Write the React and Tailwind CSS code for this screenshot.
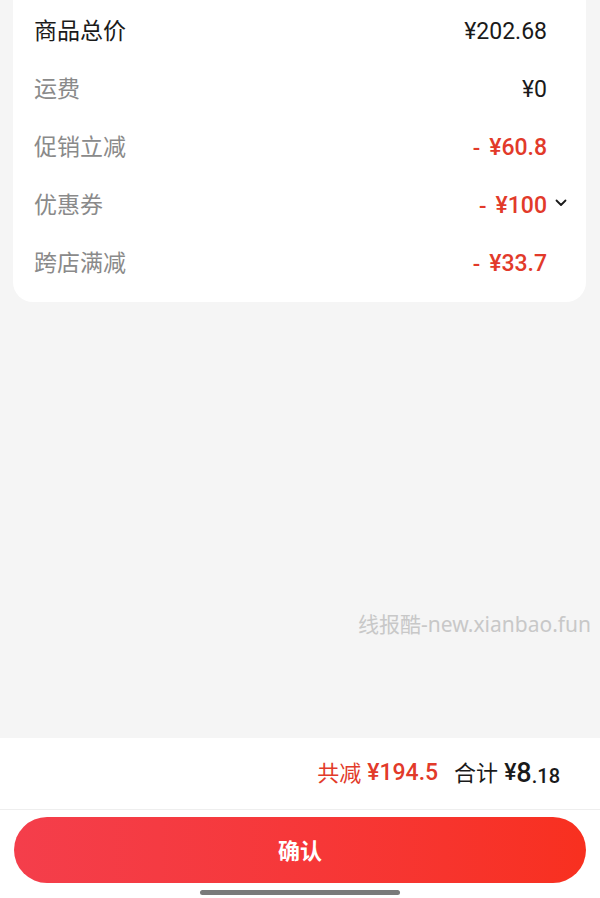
export default function App() {
  const cjk = { fontFamily: 'Roboto, "Noto Sans CJK SC", sans-serif' };
  const rows = [
    { label: "商品总价", value: "¥202.68", dark: true },
    { label: "运费", value: "¥0" },
    { label: "促销立减", value: "¥60.8", red: true },
    { label: "优惠券", value: "¥100", red: true, chevron: true },
    { label: "跨店满减", value: "¥33.7", red: true },
  ];
  return (
    <div className="relative w-[600px] h-[898px] flex flex-col bg-[#f5f5f5] overflow-hidden" style={cjk}>
      <div className="ml-[13px] mr-[14px] bg-white rounded-b-[20px] pt-[3px] pb-[9px]">
        {rows.map((r) => (
          <div key={r.label} className="h-[58px] flex items-center justify-between pl-[21px] pr-[39px]">
            <span className={`text-[23px] ${r.dark ? "text-[#1a1a1a]" : "text-[#8a8a8a]"}`}>{r.label}</span>
            <div className="relative flex items-center">
              {r.red && <span className="text-[22px] text-[#e23a2a] font-medium mr-[9px]">-</span>}
              <span className={`text-[23px] ${r.red ? "text-[#e23a2a] font-medium" : "text-[#1a1a1a]"}`}>{r.value}</span>
              {r.chevron && (
                <svg className="absolute left-[calc(100%+8px)] top-[10px]" width="12" height="8" viewBox="0 0 12 8" fill="none">
                  <path d="M1.5 1.5 L6 6 L10.5 1.5" stroke="#1a1a1a" strokeWidth="1.8" strokeLinecap="round" strokeLinejoin="round" />
                </svg>
              )}
            </div>
          </div>
        ))}
      </div>
      <div className="flex-1 relative">
        <span className="absolute left-[358px] top-[307px] text-[21px] text-[#c8c8c8]" style={{ fontFamily: '"Noto Sans", "Noto Sans CJK SC", sans-serif' }}>线报酷-new.xianbao.fun</span>
      </div>
      <div className="h-[160px] bg-white flex flex-col">
        <div className="h-[72px] flex items-center justify-end pr-[40px] border-b border-[#eeeeee]">
          <span className="text-[22px] text-[#e23a2a]">共减</span>
          <span className="text-[23px] text-[#e23a2a] font-medium ml-[6px]">¥194.5</span>
          <span className="text-[22px] text-[#1a1a1a] ml-[16px]">合计</span>
          <span className="text-[23px] text-[#1a1a1a] font-medium ml-[6px]">¥</span>
          <span className="text-[27px] text-[#1a1a1a] font-medium leading-none">8</span>
          <span className="text-[20px] text-[#1a1a1a] font-medium self-center mt-[5px]">.18</span>
        </div>
        <div className="px-[14px] pt-[7px]">
          <button className="w-full h-[66px] rounded-full bg-gradient-to-r from-[#f43e4b] to-[#f8301f] text-white text-[22px] font-bold flex items-center justify-center pt-[3px]">
            确认
          </button>
        </div>
      </div>
      <div className="absolute left-[200px] bottom-[3px] w-[200px] h-[5px] rounded-full bg-[#7a7a7a]" />
    </div>
  );
}
